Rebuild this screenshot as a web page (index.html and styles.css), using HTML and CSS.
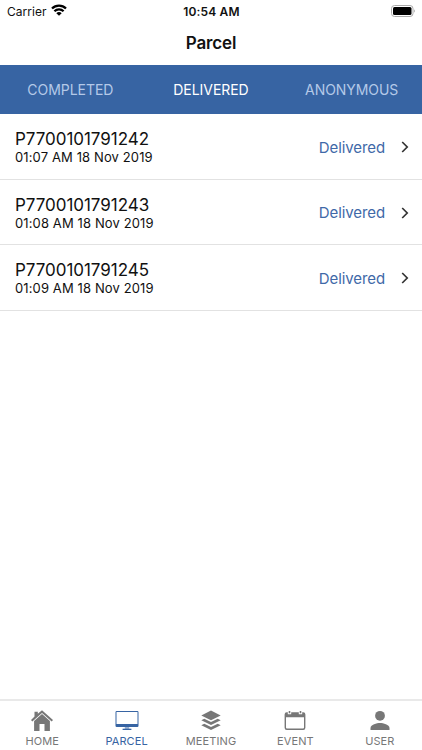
FILE: index.html
```
<!DOCTYPE html>
<html lang="en">
<head>
<meta charset="utf-8">
<title>Parcel</title>
<link rel="stylesheet" href="styles.css">
</head>
<body>
<div class="screen">
  <div class="status">
    <div class="carrier"><span>Carrier</span>
      <svg width="16" height="12" viewBox="0 0 16 12"><g fill="none" stroke="#000" stroke-width="2.3"><path d="M1 4.500a10 10 0 0 1 14 0"/><path d="M3.400 7.300a6.600 6.600 0 0 1 9.200 0"/></g><path d="M5.300 9.200a3.900 3.900 0 0 1 5.400 0L8 11.800z"/></svg>
    </div>
    <div class="clock">10:54 AM</div>
    <svg class="battery" width="25" height="12" viewBox="0 0 25 12"><rect x=".5" y=".5" width="21.5" height="11" rx="3" fill="#fff" stroke="#aaa"/><rect x="2" y="2" width="18.5" height="8" rx="1.5"/><path d="M23.3 4.2q1.5 1.8 0 3.6z" fill="#888"/></svg>
  </div>
  <h1 class="title">Parcel</h1>
  <nav class="tabs">
    <span class="tab">COMPLETED</span>
    <span class="tab active">DELIVERED</span>
    <span class="tab">ANONYMOUS</span>
  </nav>
  <main class="list">
    <div class="row">
      <div class="info"><div class="code">P7700101791242</div><div class="date">01:07 AM 18 Nov 2019</div></div>
      <span class="state">Delivered</span>
      <svg class="chevron" width="8" height="12" viewBox="0 0 8 12"><path d="M1.2 1 6.2 6l-5 5"/></svg>
    </div>
    <div class="row">
      <div class="info"><div class="code">P7700101791243</div><div class="date">01:08 AM 18 Nov 2019</div></div>
      <span class="state">Delivered</span>
      <svg class="chevron" width="8" height="12" viewBox="0 0 8 12"><path d="M1.2 1 6.2 6l-5 5"/></svg>
    </div>
    <div class="row">
      <div class="info"><div class="code">P7700101791245</div><div class="date">01:09 AM 18 Nov 2019</div></div>
      <span class="state">Delivered</span>
      <svg class="chevron" width="8" height="12" viewBox="0 0 8 12"><path d="M1.2 1 6.2 6l-5 5"/></svg>
    </div>
  </main>
  <footer class="bar">
    <div class="item"><svg width="24" height="22" viewBox="0 0 24 22"><path d="M12 .2 7.800 3.700V1.800H4.500v4.800L1 9.900l1.300 1.500L12 3l9.700 8.400L23 9.900z"/><path d="M12 4.100 4.100 11V21h5.400v-7h5v7h5.400V11z"/></svg><span>HOME</span></div>
    <div class="item selected"><svg width="24" height="22" viewBox="0 0 24 22"><path fill-rule="evenodd" d="M1.700 1h20.600q1.200 0 1.200 1.200v13.600q0 1.200-1.200 1.200H1.700Q.5 17 .5 15.800V2.200Q.5 1 1.700 1zm-.2 1v12h21V2z"/><path opacity=".5" d="M9.800 17h4.400v2H9.800z"/><path d="M7.600 18.700h8.800V20H7.600z"/></svg><span>PARCEL</span></div>
    <div class="item"><svg width="24" height="22" viewBox="0 0 24 22"><path d="m12 .6 9.700 4.800L12 10.200 2.300 5.400z"/><path d="m2.300 10.300 3-1.500L12 12.100l6.700-3.300 3 1.500L12 15.100zM2.300 15.300l3-1.500L12 17.100l6.700-3.300 3 1.500L12 20.100z"/></svg><span>MEETING</span></div>
    <div class="item"><svg width="24" height="22" viewBox="0 0 24 22"><path fill-rule="evenodd" d="M3.800 2.200h1v2h3.400v-2h7.600v2h3.400v-2h1q2.200 0 2.200 2.200v13.400q0 2.200-2.200 2.200H3.800q-2.200 0-2.200-2.200V4.400q0-2.200 2.200-2.200zM3 7.200v10.200q0 1 1 1h16q1 0 1-1V7.200z"/><path d="M5.700 1h1.600v2.300H5.700zM16.700 1h1.600v2.300h-1.600z"/></svg><span>EVENT</span></div>
    <div class="item"><svg width="24" height="22" viewBox="0 0 24 22"><circle cx="12" cy="5.800" r="4.900"/><path d="M2.500 20.100V18c0-3.200 6.400-4.900 9.500-4.900s9.500 1.700 9.500 4.900v2.100z"/></svg><span>USER</span></div>
  </footer>
</div>
</body>
</html>
```
FILE: styles.css
```
* { box-sizing: border-box; }
body { margin: 0; background: #fff; color: #111; font-family: Inter, "Liberation Sans", sans-serif; }
svg { display: block; flex: none; }
.screen { width: 422px; height: 750px; display: flex; flex-direction: column; overflow: hidden; }
.status { height: 22px; display: grid; grid-template-columns: 1fr auto 1fr; align-items: center; padding: 0 6px 0 7px; font-size: 12px; }
.carrier { display: flex; align-items: center; gap: 4px; letter-spacing: .05px; }
.carrier svg { margin-top: -2px; }
.clock { font-weight: 600; letter-spacing: .15px; }
.battery { justify-self: end; margin-top: -1px; }
.title { margin: 0; height: 43px; line-height: 43px; text-align: center; font-size: 17px; font-weight: 600; letter-spacing: -.15px; }
.tabs { height: 49px; background: #3764a3; display: grid; grid-template-columns: repeat(3, 1fr); align-items: center; text-align: center; font-size: 14px; color: #b4c9e8; }
.tab { letter-spacing: -.05px; }
.active { color: #fff; }
.list { flex: 1; }
.row { height: 65.6px; display: flex; align-items: center; padding: 2px 13.5px 0 15px; border-bottom: 1px solid #e2e2e2; }
.info { flex: 1; }
.code { font-size: 17px; line-height: 20px; letter-spacing: -.04px; }
.date { font-size: 13px; line-height: 16px; letter-spacing: .12px; }
.state { font-size: 15px; letter-spacing: -.1px; color: #3f69a8; margin-right: 15.5px; }
.chevron { fill: none; stroke: #333; stroke-width: 1.7; }
.bar { height: 51px; border-top: 2px solid #e9e9e9; display: grid; grid-template-columns: repeat(5, 1fr); color: #777; }
.item { display: flex; flex-direction: column; align-items: center; padding-top: 9px; font-size: 11px; line-height: 18px; letter-spacing: .1px; }
.item svg { fill: currentColor; }
.selected { color: #3764a3; }
```
